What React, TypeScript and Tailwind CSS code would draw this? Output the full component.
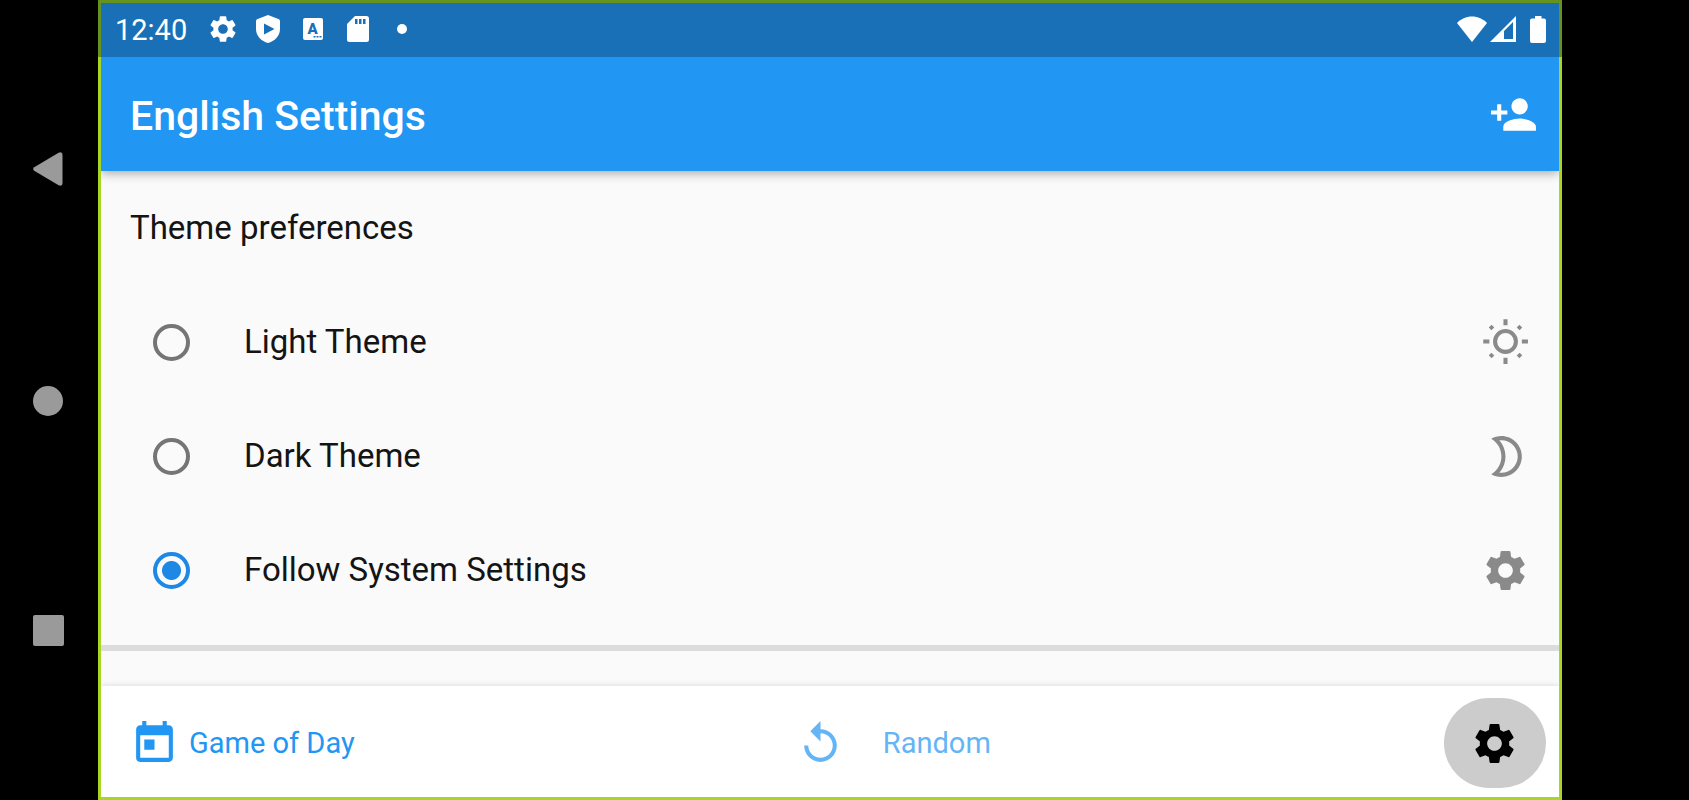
import { useState } from "react";
import { MdPersonAdd, MdReplay, MdSettings, MdToday } from "react-icons/md";

function SunIcon() {
  return (
    <svg viewBox="0 0 24 24" className="size-[49px]" fill="none" stroke="currentColor" strokeWidth="2" aria-hidden>
      <circle cx="12" cy="11.5" r="5.1" />
      <path d="M12 .6v3M12 19.5v3M1.1 11.5h3M20 11.5h3" />
      <path d="M4.5 4l1.3 1.3M18.2 17.7l1.3 1.3M19.5 4l-1.3 1.3M5.8 17.7L4.5 19" />
    </svg>
  );
}

function MoonIcon() {
  return (
    <svg viewBox="0 0 24 24" className="size-[49px]" fill="currentColor" aria-hidden>
      <path d="M10 4c4.41 0 8 3.59 8 8s-3.59 8-8 8c-.34 0-.68-.02-1.01-.07C10.9 17.77 12 14.95 12 12s-1.1-5.77-3.01-7.93C9.32 4.02 9.66 4 10 4m0-2C8.18 2 6.47 2.5 5 3.35 7.99 5.08 10 8.3 10 12s-2.01 6.92-5 8.65C6.47 21.5 8.18 22 10 22c5.52 0 10-4.48 10-10S15.52 2 10 2z" />
    </svg>
  );
}

const themes = [
  { id: "light", label: "Light Theme", icon: <SunIcon /> },
  { id: "dark", label: "Dark Theme", icon: <MoonIcon /> },
  { id: "system", label: "Follow System Settings", icon: <MdSettings className="size-[49px]" /> },
];

function NavRail() {
  return (
    <nav className="flex w-[98px] shrink-0 flex-col items-center justify-between pt-[152px] pr-[2px] pb-[154px] text-[#9a9a9a]">
      <button type="button" aria-label="Back">
        <svg viewBox="0 0 30 34" className="h-[34px] w-[30px]" fill="currentColor">
          <path d="M1.2 15.2 25.6.8Q29.5-.8 29.5 3V31Q29.5 34.8 25.6 33.2L1.2 18.8Q-.8 17 1.2 15.2z" />
        </svg>
      </button>
      <button type="button" aria-label="Home" className="size-[30px] rounded-full bg-[#9a9a9a]" />
      <button type="button" aria-label="Overview" className="size-[31px] rounded-xs bg-[#9a9a9a]" />
    </nav>
  );
}

function StatusBar() {
  return (
    <div className="flex h-[57px] items-center justify-between border-x-[3px] border-t-[3px] border-[#66921f] bg-[#1a70b7] pr-[13px] pb-[2px] pl-[14px] text-white">
      <div className="flex items-center">
        <span className="w-[92px] pt-[2px] text-[29px] leading-8">12:40</span>
        <MdSettings className="size-8" />
        <svg viewBox="0 0 24 28" className="ml-[17px] h-7 w-6" fill="currentColor" aria-hidden>
          <path fillRule="evenodd" d="M12 0 23 4.2Q24 4.7 24 6V14C24 21 18.5 26.3 12 28 5.5 26.3 0 21 0 14V6Q0 4.7 1 4.2zM8 8.5V19.5L18.5 14z" />
        </svg>
        <svg viewBox="0 0 20 22" className="ml-[23px] h-[22px] w-5" aria-hidden>
          <rect width="20" height="22" rx="2" fill="white" />
          <text x="9.5" y="16" textAnchor="middle" fontFamily="Roboto" fontSize="15" fontWeight="900" fill="#1a70b7">
            A
          </text>
          <path d="M10.5 18h2v1.5h-2zM13.5 18h2v1.5h-2zM16.5 18h2v1.5h-2z" fill="#1a70b7" />
        </svg>
        <svg viewBox="0 0 22 26" className="ml-6 h-[26px] w-[22px]" fill="currentColor" aria-hidden>
          <path fillRule="evenodd" d="M8 0H19.5Q22 0 22 2.5V23.5Q22 26 19.5 26H2.5Q0 26 0 23.5V8zM8 3V8H10.5V3zM12 3V8H14.5V3zM16 3V8H18.5V3z" />
        </svg>
        <span className="ml-7 size-[10px] rounded-full bg-white" />
      </div>
      <div className="flex items-center">
        <svg viewBox="0 0 30 26" className="h-[26px] w-[30px]" fill="currentColor" aria-hidden>
          <path d="M15 26 0 7C4 3 9 .5 15 .5S26 3 30 7z" />
        </svg>
        <svg viewBox="0 0 26 26" className="ml-[3px] size-[26px]" fill="currentColor" aria-hidden>
          <path fillRule="evenodd" d="M0 26 26 0V26zM14 15V23H23V6z" />
        </svg>
        <svg viewBox="0 0 16 27" className="ml-[14px] h-[27px] w-4" fill="currentColor" aria-hidden>
          <path d="M5 0H11.5V2.5H14Q16 2.5 16 4.5V25Q16 27 14 27H2Q0 27 0 25V4.5Q0 2.5 2 2.5H5z" />
        </svg>
      </div>
    </div>
  );
}

export default function App() {
  const [theme, setTheme] = useState("system");

  return (
    <div className="flex h-screen bg-black font-[Roboto,sans-serif]">
      <NavRail />

      <div className="flex min-w-0 flex-1 flex-col bg-[#fafafa]">
        <StatusBar />

        <div className="flex min-h-0 flex-1 flex-col overflow-hidden border-x-[3px] border-b-[3px] border-[#a9d523]">
          <header className="z-10 flex h-[114px] shrink-0 items-center justify-between bg-[#2196f3] pr-[21px] pl-[29px] text-white shadow-[0_2px_10px_rgba(0,0,0,0.35)]">
            <h1 className="pt-[3px] text-[41px] leading-[48px] font-medium">English Settings</h1>
            <button type="button" aria-label="Add person">
              <MdPersonAdd className="size-[49px]" />
            </button>
          </header>

          <main className="min-h-0 flex-1 overflow-hidden text-[33px] leading-10 text-[#141414]">
            <h2 className="flex h-[114px] items-center pl-[29px]">Theme preferences</h2>
            {themes.map((t) => (
              <label key={t.id} className="flex h-[114px] items-center pr-[29px] pl-[52px]">
                <input
                  type="radio"
                  name="theme"
                  checked={theme === t.id}
                  onChange={() => setTheme(t.id)}
                  className="mr-[54px] size-[37px] shrink-0 appearance-none rounded-full border-4 border-[#757575] checked:border-[#1e88e5] checked:bg-[radial-gradient(circle,#1e88e5_9px,transparent_10px)]"
                />
                <span className="flex-1">{t.label}</span>
                <span className="text-[#8a8a8a]">{t.icon}</span>
              </label>
            ))}
            <hr className="mt-[18px] border-t-[6px] border-[#dcdcdc]" />
          </main>

          <footer className="z-10 flex items-center justify-between bg-white pt-3 pr-[13px] pb-[9px] pl-[29px] text-[29px] leading-9 text-[#2196f3] shadow-[0_0_6px_rgba(0,0,0,0.15)]">
            <button type="button" className="flex items-center gap-[10px]">
              <MdToday className="size-[49px]" />
              Game of Day
            </button>
            <button type="button" className="flex items-center gap-[38px] pr-3 text-[#64b5f6]">
              <MdReplay className="size-[49px]" />
              Random
            </button>
            <button
              type="button"
              aria-label="Settings"
              className="flex h-[90px] w-[102px] items-center justify-center rounded-full bg-[#cccccc] text-black"
            >
              <MdSettings className="size-[49px]" />
            </button>
          </footer>
        </div>
      </div>

      <div className="w-[127px] shrink-0" />
    </div>
  );
}
